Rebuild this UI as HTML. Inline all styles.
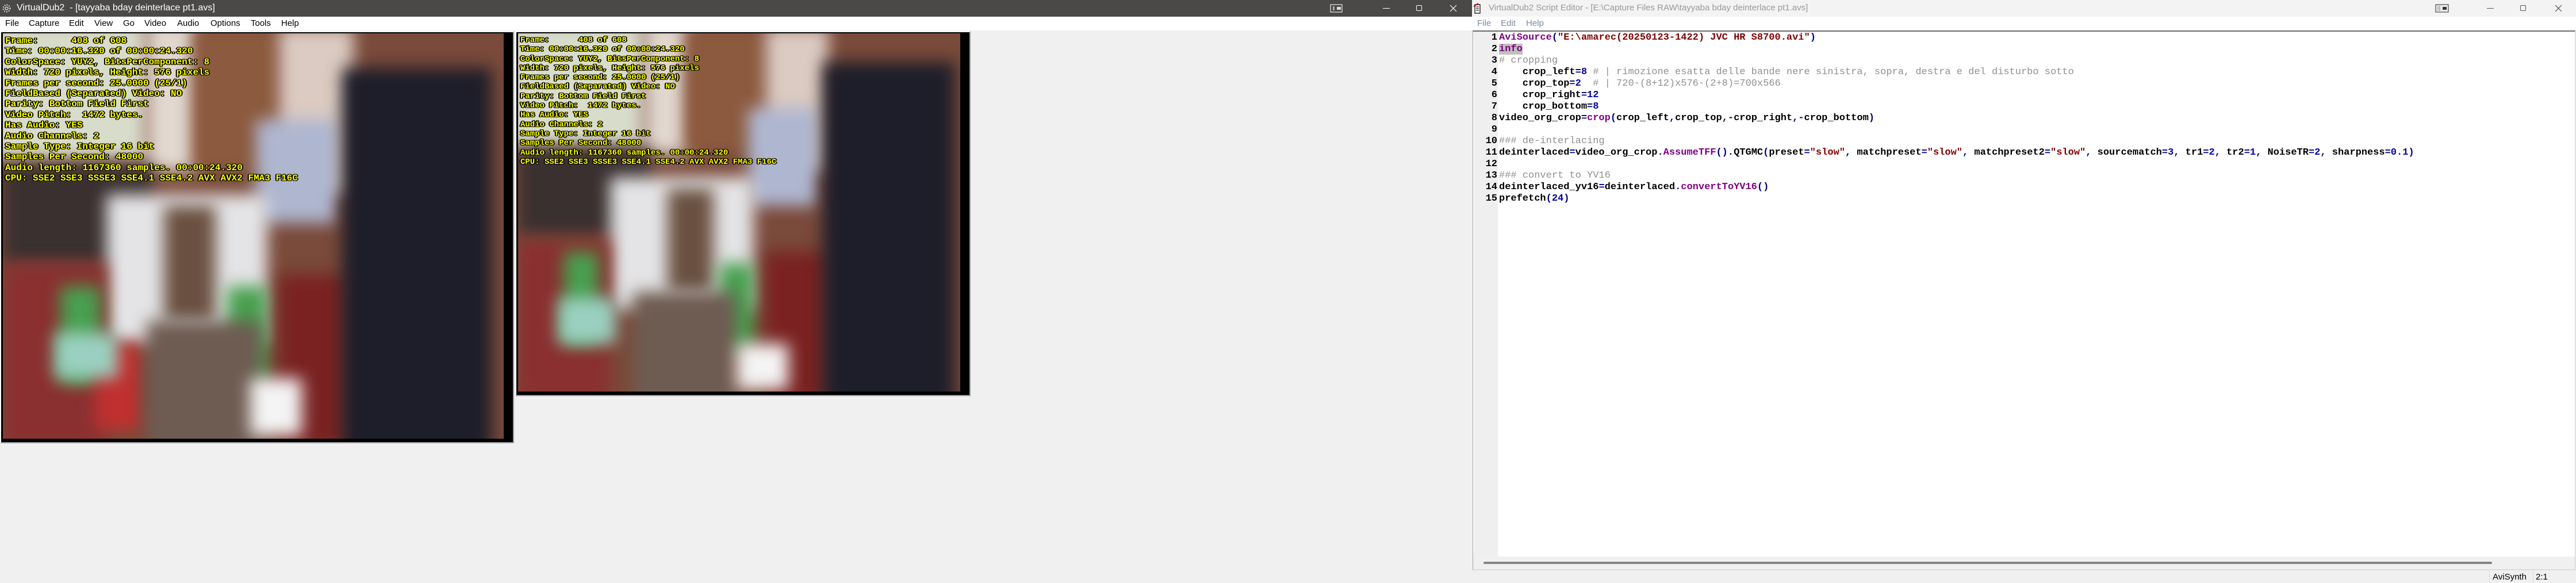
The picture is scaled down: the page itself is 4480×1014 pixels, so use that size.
<!DOCTYPE html>
<html><head><meta charset="utf-8">
<style>
*{margin:0;padding:0;box-sizing:border-box}
body{width:4480px;height:1014px;overflow:hidden;background:#f0f0f0;font-family:"Liberation Sans",sans-serif;position:relative}
.abs{position:absolute}
.tb{top:0;height:29px}
.ttl{position:absolute;top:5px;font-size:16px;white-space:nowrap}
.menu{top:29px;height:24px;background:#fff}
.menu span{position:absolute;top:3px;font-size:15px}
.pane{position:absolute;background:#000;border:2px solid #a0a0a0;border-top-color:#fff;border-left-color:#fff;overflow:hidden}
.vid{position:absolute;left:3px;top:2px;right:6px;bottom:6px;overflow:hidden;background:#7a4a3a}
.b{position:absolute;filter:blur(14px)}
.ov{position:absolute;left:4px;top:4px;font-family:"Liberation Mono",monospace;font-weight:bold;color:#ff0;white-space:pre;
text-shadow:-1px -1px 0 #000,1px -1px 0 #000,-1px 1px 0 #000,1px 1px 0 #000,2px 0 0 #000,-2px 0 0 #000}
.code{position:absolute;left:2607px;top:56px;font-family:"Liberation Mono",monospace;font-weight:bold;font-size:17px;line-height:20px;white-space:pre;color:#000}
.ln{position:absolute;left:2563px;width:41px;top:56px;font-family:"Liberation Mono",monospace;font-weight:bold;font-size:17px;line-height:20px;text-align:right;white-space:pre}
.k{color:#800080}.s{color:#800000}.n{color:#0000a0}.c{color:#909090;font-weight:normal}.p{color:#000080}
</style></head><body>

<!-- left window title -->
<div class="abs tb" style="left:0;width:2560px;background:#4a4948"></div>
<svg class="abs" style="left:3px;top:6px" width="17" height="17" viewBox="0 0 17 17"><circle cx="8.5" cy="8.5" r="6" fill="none" stroke="#ddd" stroke-width="2" stroke-dasharray="2 2"/><circle cx="8.5" cy="8.5" r="2.5" fill="none" stroke="#ddd" stroke-width="1.5"/></svg>
<div class="ttl" style="left:29px;color:#fff">VirtualDub2&nbsp; - [tayyaba bday deinterlace pt1.avs]</div>
<svg class="abs" style="left:2313px;top:7px" width="22" height="15"><rect x="1" y="1" width="20" height="13" fill="none" stroke="#ccc" stroke-width="1.5"/><rect x="5" y="4" width="3" height="7" fill="#aaa"/><rect x="12" y="5" width="7" height="5" fill="#ddd"/></svg>
<div class="abs" style="left:2405px;top:14px;width:12px;height:1px;background:#fff"></div>
<div class="abs" style="left:2463px;top:9px;width:10px;height:10px;border:1px solid #fff;border-radius:2px"></div>
<svg class="abs" style="left:2521px;top:8px" width="13" height="13"><path d="M1 1L12 12M12 1L1 12" stroke="#fff" stroke-width="1.2"/></svg>
<div class="abs menu" style="left:0;width:2560px">
<span style="left:9px">File</span><span style="left:50px">Capture</span><span style="left:120px">Edit</span><span style="left:164px">View</span><span style="left:214px">Go</span><span style="left:251px">Video</span><span style="left:308px">Audio</span><span style="left:366px">Options</span><span style="left:436px">Tools</span><span style="left:489px">Help</span>
</div>

<!-- pane 1 -->
<div class="pane" style="left:0;top:54px;width:894px;height:717px">
<div class="vid">
<div class="b" style="left:-20px;top:-20px;width:270px;height:240px;background:#d8dccb"></div>
<div class="b" style="left:250px;top:-20px;width:90px;height:260px;background:#e2d8d0"></div>
<div class="b" style="left:330px;top:-10px;width:150px;height:250px;background:#8c5a3e"></div>
<div class="b" style="left:480px;top:-10px;width:130px;height:290px;background:#dccbc2"></div>
<div class="b" style="left:440px;top:150px;width:140px;height:180px;background:#aeb6d0"></div>
<div class="b" style="left:0;top:230px;width:260px;height:170px;background:#3a3030"></div>
<div class="b" style="left:180px;top:280px;width:280px;height:260px;background:#e4e4e6"></div>
<div class="b" style="left:280px;top:300px;width:90px;height:200px;background:#6a5040"></div>
<div class="b" style="left:0;top:400px;width:180px;height:320px;background:#8a3030"></div>
<div class="b" style="left:100px;top:440px;width:70px;height:170px;background:#48a050"></div>
<div class="b" style="left:390px;top:440px;width:70px;height:170px;background:#48a050"></div>
<div class="b" style="left:160px;top:540px;width:80px;height:150px;background:#c03030"></div>
<div class="b" style="left:90px;top:520px;width:110px;height:80px;background:#9ad0c0"></div>
<div class="b" style="left:250px;top:500px;width:200px;height:240px;background:#6e5c52"></div>
<div class="b" style="left:480px;top:420px;width:120px;height:300px;background:#7a2222"></div>
<div class="b" style="left:590px;top:60px;width:260px;height:700px;background:#1e1e2a"></div>
<div class="b" style="left:430px;top:600px;width:90px;height:100px;background:#f4f4f4"></div>
<div class="abs" style="right:0;top:0;width:10px;height:100%;background:#000"></div>
<div class="ov" style="font-size:16px;line-height:18.4px">Frame:      408 of 608
Time: 00:00:16.320 of 00:00:24.320
ColorSpace: YUY2, BitsPerComponent: 8
Width: 720 pixels, Height: 576 pixels
Frames per second: 25.0000 (25/1)
FieldBased (Separated) Video: NO
Parity: Bottom Field First
Video Pitch:  1472 bytes.
Has Audio: YES
Audio Channels: 2
Sample Type: Integer 16 bit
Samples Per Second: 48000
Audio length: 1167360 samples. 00:00:24.320
CPU: SSE2 SSE3 SSSE3 SSE4.1 SSE4.2 AVX AVX2 FMA3 F16C</div>
</div></div>

<!-- pane 2 -->
<div class="pane" style="left:896px;top:54px;width:792px;height:635px">
<div class="vid">
<div class="b" style="left:-20px;top:-20px;width:240px;height:220px;background:#d8dccb"></div>
<div class="b" style="left:220px;top:-20px;width:80px;height:230px;background:#e2d8d0"></div>
<div class="b" style="left:290px;top:-10px;width:140px;height:220px;background:#8c5a3e"></div>
<div class="b" style="left:430px;top:-10px;width:110px;height:250px;background:#dccbc2"></div>
<div class="b" style="left:400px;top:130px;width:120px;height:170px;background:#aeb6d0"></div>
<div class="b" style="left:0;top:200px;width:230px;height:150px;background:#3a3030"></div>
<div class="b" style="left:160px;top:250px;width:250px;height:230px;background:#e4e4e6"></div>
<div class="b" style="left:260px;top:270px;width:80px;height:180px;background:#6a5040"></div>
<div class="b" style="left:0;top:360px;width:160px;height:280px;background:#8a3030"></div>
<div class="b" style="left:80px;top:380px;width:60px;height:160px;background:#48a050"></div>
<div class="b" style="left:350px;top:400px;width:60px;height:150px;background:#48a050"></div>
<div class="b" style="left:70px;top:460px;width:100px;height:80px;background:#9ad0c0"></div>
<div class="b" style="left:200px;top:450px;width:180px;height:200px;background:#6e5c52"></div>
<div class="b" style="left:430px;top:380px;width:110px;height:260px;background:#7a2222"></div>
<div class="b" style="left:530px;top:50px;width:230px;height:620px;background:#1e1e2a"></div>
<div class="b" style="left:380px;top:540px;width:90px;height:80px;background:#f4f4f4"></div>
<div class="abs" style="right:0;top:0;width:10px;height:100%;background:#000"></div>
<div class="ov" style="font-size:14px;line-height:16.3px">Frame:      408 of 608
Time: 00:00:16.320 of 00:00:24.320
ColorSpace: YUY2, BitsPerComponent: 8
Width: 720 pixels, Height: 576 pixels
Frames per second: 25.0000 (25/1)
FieldBased (Separated) Video: NO
Parity: Bottom Field First
Video Pitch:  1472 bytes.
Has Audio: YES
Audio Channels: 2
Sample Type: Integer 16 bit
Samples Per Second: 48000
Audio length: 1167360 samples. 00:00:24.320
CPU: SSE2 SSE3 SSSE3 SSE4.1 SSE4.2 AVX AVX2 FMA3 F16C</div>
</div></div>

<!-- right window -->
<div class="abs tb" style="left:2560px;width:1920px;background:#f3f3f3"></div>
<svg class="abs" style="left:2562px;top:5px" width="14" height="19"><rect x="3" y="3" width="9" height="15" fill="#fff" stroke="#000" stroke-width="1.2"/><path d="M5 7h5M5 10h5M5 13h5" stroke="#000"/><path d="M1 6L9 1" stroke="#c00" stroke-width="2"/></svg>
<div class="ttl" style="left:2589px;color:#999;font-size:15px">VirtualDub2 Script Editor - [E:\Capture Files RAW\tayyaba bday deinterlace pt1.avs]</div>
<svg class="abs" style="left:4235px;top:7px" width="24" height="15"><rect x="1" y="1" width="22" height="13" fill="#eee" stroke="#555" stroke-width="1.3"/><path d="M5 3v9M8 3v9" stroke="#777"/><rect x="13" y="5" width="7" height="5" fill="#333"/></svg>
<div class="abs" style="left:4325px;top:14px;width:12px;height:1px;background:#555"></div>
<div class="abs" style="left:4383px;top:9px;width:10px;height:10px;border:1px solid #555;border-radius:2px"></div>
<svg class="abs" style="left:4443px;top:8px" width="13" height="13"><path d="M1 1L12 12M12 1L1 12" stroke="#555" stroke-width="1.2"/></svg>
<div class="abs menu" style="left:2560px;width:1920px;color:#7a8aa0">
<span style="left:9px">File</span><span style="left:50px">Edit</span><span style="left:94px">Help</span>
</div>

<div class="abs" style="left:2561px;top:53px;width:1918px;height:938px;background:#fff;border-top:2px solid #6a6a6a;border-left:1px solid #a0a0a0;border-right:1px solid #d0d0d0"></div>
<div class="abs" style="left:2563px;top:55px;width:42px;height:913px;background:#efefef"></div>
<div class="abs" style="left:2562px;top:968px;width:1916px;height:22px;background:#f0f0f0"></div>
<div class="abs" style="left:2580px;top:977px;width:1754px;height:4px;background:#858585;border-radius:2px"></div>
<div class="abs" style="left:2560px;top:990px;width:1920px;height:2px;background:#dcdcdc"></div>
<div class="abs" style="left:4329px;top:993px;width:1px;height:21px;background:#d8d8d8"></div>
<div class="abs" style="left:4405px;top:993px;width:1px;height:21px;background:#d8d8d8"></div>
<div class="abs" style="left:4335px;top:995px;font-size:15px">AviSynth</div>
<div class="abs" style="left:4410px;top:995px;font-size:15px">2:1</div>

<div class="ln">1
2
3
4
5
6
7
8
9
10
11
12
13
14
15</div>
<div class="code"><span class="k">AviSource</span><span class="p">(</span><span class="s">"E:\amarec(20250123-1422) JVC HR S8700.avi"</span><span class="p">)</span>
<span class="k" style="background:#c0c0c0">info</span>
<span class="c"># cropping</span>
    crop_left<span class="p">=</span><span class="n">8</span> <span class="c"># | rimozione esatta delle bande nere sinistra, sopra, destra e del disturbo sotto</span>
    crop_top<span class="p">=</span><span class="n">2</span>  <span class="c"># | 720-(8+12)x576-(2+8)=700x566</span>
    crop_right<span class="p">=</span><span class="n">12</span>
    crop_bottom<span class="p">=</span><span class="n">8</span>
video_org_crop<span class="p">=</span><span class="k">crop</span><span class="p">(</span>crop_left<span class="p">,</span>crop_top<span class="p">,-</span>crop_right<span class="p">,-</span>crop_bottom<span class="p">)</span>

<span class="c">### de-interlacing</span>
deinterlaced<span class="p">=</span>video_org_crop<span class="p">.</span><span class="k">AssumeTFF</span><span class="p">().</span>QTGMC<span class="p">(</span>preset<span class="p">=</span><span class="s">"slow"</span><span class="p">,</span> matchpreset<span class="p">=</span><span class="s">"slow"</span><span class="p">,</span> matchpreset2<span class="p">=</span><span class="s">"slow"</span><span class="p">,</span> sourcematch<span class="p">=</span><span class="n">3</span><span class="p">,</span> tr1<span class="p">=</span><span class="n">2</span><span class="p">,</span> tr2<span class="p">=</span><span class="n">1</span><span class="p">,</span> NoiseTR<span class="p">=</span><span class="n">2</span><span class="p">,</span> sharpness<span class="p">=</span><span class="n">0.1</span><span class="p">)</span>

<span class="c">### convert to YV16</span>
deinterlaced_yv16<span class="p">=</span>deinterlaced<span class="p">.</span><span class="k">convertToYV16</span><span class="p">()</span>
prefetch<span class="p">(</span><span class="n">24</span><span class="p">)</span></div>
</body></html>
